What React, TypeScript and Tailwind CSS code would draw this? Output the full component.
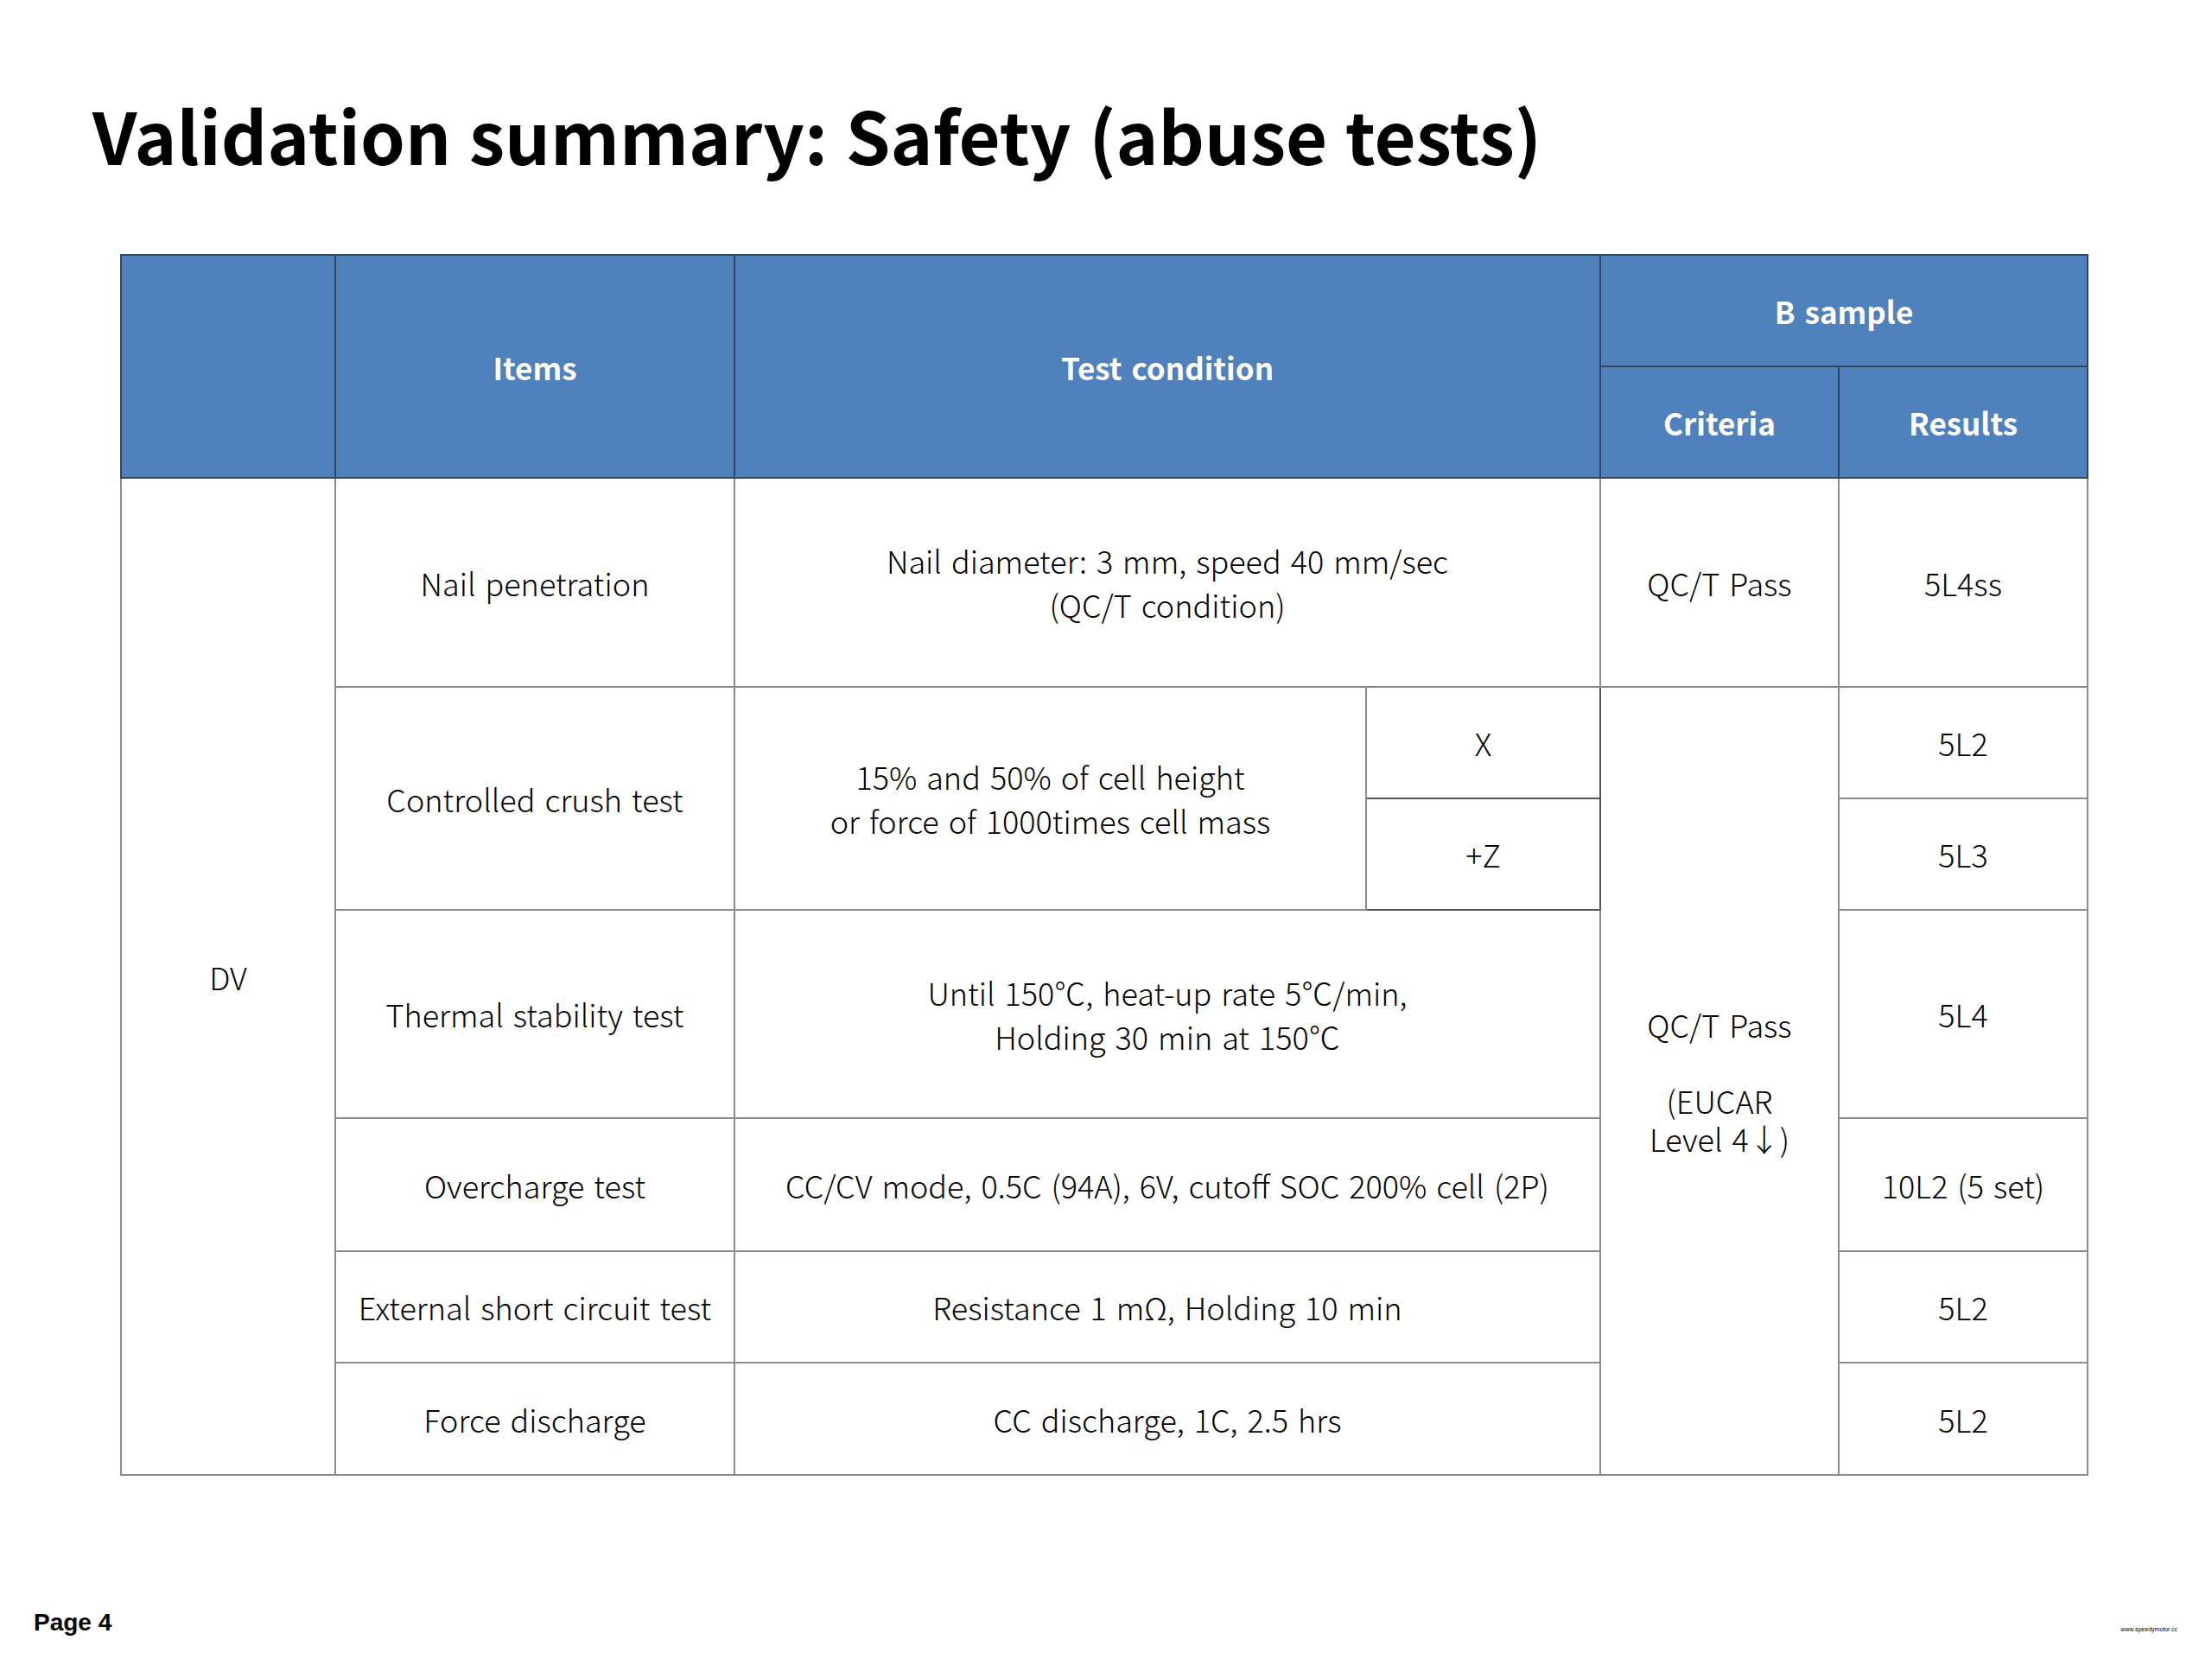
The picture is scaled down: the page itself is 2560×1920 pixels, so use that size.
import type { ReactNode } from "react";

const head =
  "flex items-center justify-center text-center bg-[#4f81bd] text-white font-bold text-[35px] border-r-2 border-b-2 border-[#34465e]";
const body =
  "flex items-center justify-center text-center bg-white text-black font-light border-r-2 border-b-2 border-[#8c8c8c]";

function Cell({ className, children }: { className: string; children?: ReactNode }) {
  return <div className={className}>{children}</div>;
}

export default function App() {
  return (
    <div
      className="w-[2560px] h-[1920px] bg-white flex flex-col"
      style={{ fontFamily: '"Noto Sans CJK KR", "Noto Sans", sans-serif' }}>
      {/* Title */}
      <h1 className="pl-[107px] pt-[95px] text-[83px] leading-[120px] font-bold text-black [word-spacing:2px]">
        Validation summary: Safety (abuse tests)
      </h1>

      {/* Table */}
      <div className="ml-[139px] mt-[79px] w-[2278px] grid grid-cols-[250px_462px_731px_271px_276px_288px] grid-rows-[129px_129px_242px_129px_129px_241px_154px_129px_130px] border-t-2 border-[#34465e] text-[36px] leading-[51px] [word-spacing:3px]">
        {/* header */}
        <Cell className={`${head} col-start-1 row-start-1 row-span-2 border-l-2`} />
        <Cell className={`${head} col-start-2 row-start-1 row-span-2`}>Items</Cell>
        <Cell className={`${head} col-start-3 col-span-2 row-start-1 row-span-2`}>Test condition</Cell>
        <Cell className={`${head} col-start-5 col-span-2 row-start-1`}>B sample</Cell>
        <Cell className={`${head} col-start-5 row-start-2`}>Criteria</Cell>
        <Cell className={`${head} col-start-6 row-start-2`}>Results</Cell>

        {/* DV */}
        <Cell className={`${body} col-start-1 row-start-3 row-span-7 border-l-2`}>DV</Cell>

        {/* Nail penetration */}
        <Cell className={`${body} col-start-2 row-start-3`}>Nail penetration</Cell>
        <Cell className={`${body} col-start-3 col-span-2 row-start-3`}>
          Nail diameter: 3 mm, speed 40 mm/sec
          <br />
          (QC/T condition)
        </Cell>
        <Cell className={`${body} col-start-5 row-start-3`}>QC/T Pass</Cell>
        <Cell className={`${body} col-start-6 row-start-3`}>5L4ss</Cell>

        {/* Controlled crush */}
        <Cell className={`${body} col-start-2 row-start-4 row-span-2`}>Controlled crush test</Cell>
        <Cell className={`${body} col-start-3 row-start-4 row-span-2`}>
          15% and 50% of cell height
          <br />
          or force of 1000times cell mass
        </Cell>
        <Cell className={`${body} col-start-4 row-start-4 border-[#555]`}>X</Cell>
        <Cell className={`${body} col-start-4 row-start-5 border-[#555]`}>+Z</Cell>
        <Cell className={`${body} col-start-5 row-start-4 row-span-6 leading-[44px]`}>
          QC/T Pass
          <br />
          <br />
          (EUCAR
          <br />
          Level 4↓)
        </Cell>
        <Cell className={`${body} col-start-6 row-start-4`}>5L2</Cell>
        <Cell className={`${body} col-start-6 row-start-5`}>5L3</Cell>

        {/* Thermal stability */}
        <Cell className={`${body} col-start-2 row-start-6`}>Thermal stability test</Cell>
        <Cell className={`${body} col-start-3 col-span-2 row-start-6`}>
          Until 150℃, heat-up rate 5℃/min,
          <br />
          Holding 30 min at 150℃
        </Cell>
        <Cell className={`${body} col-start-6 row-start-6`}>5L4</Cell>

        {/* Overcharge */}
        <Cell className={`${body} col-start-2 row-start-7`}>Overcharge test</Cell>
        <Cell className={`${body} col-start-3 col-span-2 row-start-7`}>
          CC/CV mode, 0.5C (94A), 6V, cutoff SOC 200% cell (2P)
        </Cell>
        <Cell className={`${body} col-start-6 row-start-7`}>10L2 (5 set)</Cell>

        {/* External short */}
        <Cell className={`${body} col-start-2 row-start-8 whitespace-nowrap`}>External short circuit test</Cell>
        <Cell className={`${body} col-start-3 col-span-2 row-start-8`}>Resistance 1 mΩ, Holding 10 min</Cell>
        <Cell className={`${body} col-start-6 row-start-8`}>5L2</Cell>

        {/* Force discharge */}
        <Cell className={`${body} col-start-2 row-start-9`}>Force discharge</Cell>
        <Cell className={`${body} col-start-3 col-span-2 row-start-9`}>CC discharge, 1C, 2.5 hrs</Cell>
        <Cell className={`${body} col-start-6 row-start-9`}>5L2</Cell>
      </div>

      {/* Footer */}
      <div className="mt-auto flex items-end justify-between pl-[39px] pr-[40px] pb-[26px]">
        <span className="font-['Liberation_Sans',sans-serif] font-bold text-[28px] leading-[32px] text-black">
          Page 4
        </span>
        <span className="font-['Liberation_Sans',sans-serif] text-[7px] leading-[8px] text-black pb-[4px]">
          www.speedymotor.cc
        </span>
      </div>
    </div>
  );
}
